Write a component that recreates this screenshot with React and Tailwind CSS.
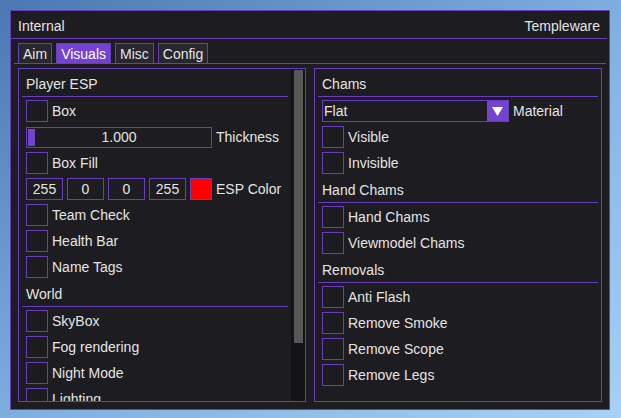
import React from "react";

const font = { fontFamily: '"Liberation Sans", Arial, sans-serif' };

const Checkbox = ({ label }) => (
  <div className="flex items-center h-[22px] gap-[4px]">
    <div className="w-[22px] h-[22px] border border-[#6a3dbd] bg-[#1c1b20]"></div>
    <span>{label}</span>
  </div>
);

const SectionTitle = ({ title, first }) => (
  <div
    className={`${first ? "h-[28px]" : "h-[28px] mt-[1px]"} mx-[3px] border-b border-[#6a3dbd] flex items-center pt-[3px] pl-[4px]`}
  >
    {title}
  </div>
);

const Items = ({ children }) => (
  <div className="flex flex-col gap-[4px] pt-[3px] px-[7px]">{children}</div>
);

const Slider = ({ value, label }) => (
  <div className="flex items-center h-[22px] gap-[4px]">
    <div className="relative w-[186px] h-[21px] border border-[#6a3dbd] flex items-center justify-center">
      <div className="absolute left-[1px] top-[1px] bottom-[1px] w-[7px] bg-[#7443cf]"></div>
      <span>{value}</span>
    </div>
    <span>{label}</span>
  </div>
);

const ColorRow = () => (
  <div className="flex items-center h-[22px] gap-[4px]">
    {["255", "0", "0", "255"].map((v, i) => (
      <div
        key={i}
        className="w-[37px] h-[22px] border border-[#6a3dbd] flex items-center justify-center"
      >
        {v}
      </div>
    ))}
    <div className="w-[22px] h-[22px] border border-[#6a3dbd] bg-[#ff0000]"></div>
    <span>ESP Color</span>
  </div>
);

const Dropdown = ({ value, label }) => (
  <div className="flex items-center h-[22px] gap-[4px]">
    <div className="w-[187px] h-[22px] border border-[#6a3dbd] flex items-center">
      <span className="flex-1 pl-[1px]">{value}</span>
      <div className="w-[21px] h-full bg-[#7443cf] flex items-center justify-center">
        <svg width="11" height="9" viewBox="0 0 11 9">
          <path d="M0 0 L11 0 L5.5 9 Z" fill="#ffffff" />
        </svg>
      </div>
    </div>
    <span>{label}</span>
  </div>
);

const tabs = ["Aim", "Visuals", "Misc", "Config"];

export default function App() {
  return (
    <div
      className="w-[621px] h-[418px] pt-[10px] pl-[10px] bg-gradient-to-br from-[#4a78b2] via-[#7eaee0] to-[#a9d0f5] text-[14px] leading-[16px] text-[#e4e4e4]"
      style={font}
    >
      <div className="w-[600px] h-[400px] border border-[#6a3dbd] bg-[#1d1c21] flex flex-col">
        {/* HEADER */}
        <div className="h-[28px] mr-[2px] border-b border-[#6a3dbd] flex items-center justify-between px-[7px] pt-[3px]">
          <span>Internal</span>
          <span>Templeware</span>
        </div>

        {/* TABS */}
        <div className="mx-[3px] mt-[4px] border-b border-[#6a3dbd] flex gap-[4px] pl-[4px]">
          {tabs.map((t) => (
            <div
              key={t}
              className={`h-[20px] px-[4px] border border-b-0 border-[#6a3dbd] flex items-center ${
                t === "Visuals" ? "bg-[#7443cf] text-white" : "bg-[#28272f]"
              }`}
            >
              {t}
            </div>
          ))}
        </div>

        {/* PANELS */}
        <div className="flex-1 flex gap-[8px] px-[7px] pt-[4px] pb-[7px] min-h-0">
          <div className="flex-1 border border-[#6a3dbd] flex min-h-0 overflow-hidden">
            <div className="flex-1 min-w-0 overflow-hidden">
              <SectionTitle title="Player ESP" first />
              <Items>
                <Checkbox label="Box" />
                <Slider value="1.000" label="Thickness" />
                <Checkbox label="Box Fill" />
                <ColorRow />
                <Checkbox label="Team Check" />
                <Checkbox label="Health Bar" />
                <Checkbox label="Name Tags" />
              </Items>
              <SectionTitle title="World" />
              <Items>
                <Checkbox label="SkyBox" />
                <Checkbox label="Fog rendering" />
                <Checkbox label="Night Mode" />
                <Checkbox label="Lighting" />
              </Items>
            </div>
            <div className="w-[14px] bg-[#141317] pt-[1px] pl-[3px] pr-[2px]">
              <div className="h-[273px] bg-[#575757]"></div>
            </div>
          </div>

          <div className="flex-1 border border-[#6a3dbd]">
            <SectionTitle title="Chams" first />
            <Items>
              <Dropdown value="Flat" label="Material" />
              <Checkbox label="Visible" />
              <Checkbox label="Invisible" />
            </Items>
            <SectionTitle title="Hand Chams" />
            <Items>
              <Checkbox label="Hand Chams" />
              <Checkbox label="Viewmodel Chams" />
            </Items>
            <SectionTitle title="Removals" />
            <Items>
              <Checkbox label="Anti Flash" />
              <Checkbox label="Remove Smoke" />
              <Checkbox label="Remove Scope" />
              <Checkbox label="Remove Legs" />
            </Items>
          </div>
        </div>
      </div>
    </div>
  );
}
